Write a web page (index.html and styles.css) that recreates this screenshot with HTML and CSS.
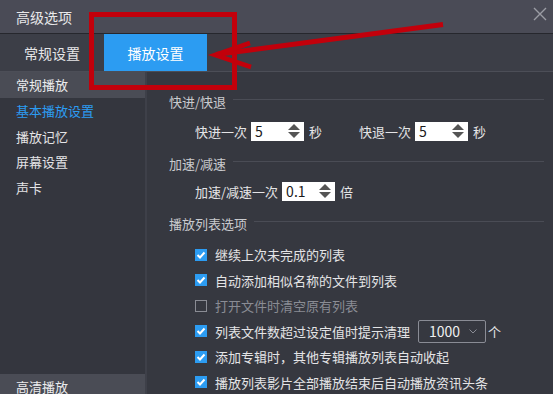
FILE: index.html
```html
<!DOCTYPE html>
<html lang="zh-CN">
<head>
  <meta charset="UTF-8">
  <title>高级选项</title>
  <link rel="stylesheet" href="styles.css">
</head>
<body>
  <div class="window">
    <div class="titlebar">
      <span class="title">高级选项</span>
      <svg class="close" width="14" height="14" viewBox="0 0 14 14">
        <path d="M1 1 L13 13 M13 1 L1 13" stroke="#9b9ca4" stroke-width="1.4" fill="none"/>
      </svg>
    </div>

    <div class="tabs">
      <div class="tab">常规设置</div>
      <div class="tab active">播放设置</div>
    </div>

    <div class="main">
      <aside class="sidebar">
        <div class="group-head">常规播放</div>
        <ul class="nav">
          <li class="current">基本播放设置</li>
          <li>播放记忆</li>
          <li>屏幕设置</li>
          <li>声卡</li>
        </ul>
        <div class="group-head">高清播放</div>
      </aside>

      <section class="content">
        <div class="section-head first"><span>快进/快退</span></div>
        <div class="row">
          <span>快进一次</span>
          <span class="spin"><span class="val">5</span><span class="arrows"><i class="up"></i><i class="down"></i></span></span>
          <span class="unit">秒</span>
          <span class="gap">快退一次</span>
          <span class="spin"><span class="val">5</span><span class="arrows"><i class="up"></i><i class="down"></i></span></span>
          <span class="unit">秒</span>
        </div>

        <div class="section-head"><span>加速/减速</span></div>
        <div class="row speed">
          <span>加速/减速一次</span>
          <span class="spin"><span class="val">0.1</span><span class="arrows"><i class="up"></i><i class="down"></i></span></span>
          <span class="unit">倍</span>
        </div>

        <div class="section-head"><span>播放列表选项</span></div>
        <ul class="checks">
          <li><span class="box on"></span>继续上次未完成的列表</li>
          <li><span class="box on"></span>自动添加相似名称的文件到列表</li>
          <li class="off"><span class="box"></span>打开文件时清空原有列表</li>
          <li><span class="box on"></span>列表文件数超过设定值时提示清理
            <span class="select">1000<svg width="8" height="5" viewBox="0 0 8 5"><path d="M0.5 0.5 L4 4 L7.5 0.5" stroke="#8a8c95" fill="none"/></svg></span>个</li>
          <li><span class="box on"></span>添加专辑时，其他专辑播放列表自动收起</li>
          <li><span class="box on"></span>播放列表影片全部播放结束后自动播放资讯头条</li>
        </ul>
      </section>
    </div>

    <!-- annotation drawn over the screenshot -->
    <svg class="mark" width="553" height="394" viewBox="0 0 553 394">
      <rect x="91.5" y="14.5" width="143" height="73" fill="none" stroke="#c2000b" stroke-width="5"/>
      <path d="M443 24.5 L216 54.5" stroke="#c2000b" stroke-width="5" fill="none"/>
      <path d="M250 43 L215 55 L251 67" stroke="#c2000b" stroke-width="4.5" fill="none" stroke-linejoin="miter"/>
    </svg>
  </div>
</body>
</html>
```

FILE: styles.css
```css
html, body {
  margin: 0;
  padding: 0;
  overflow: hidden;
}
body {
  font-family: "Noto Sans CJK SC", "Noto Sans", sans-serif;
  font-size: 13px;
  color: #e4e4e6;
  background: #363840;
}
.window {
  position: relative;
  width: 553px;
  height: 400px;
  overflow: hidden;
  background: #363840;
}
.titlebar {
  height: 33px;
  display: flex;
  align-items: center;
  justify-content: space-between;
  padding: 0 6px 0 16px;
  background: #4a4b56;
  border-bottom: 1px solid #26272d;
}
.title {
  font-size: 14px;
  color: #e8e8ea;
}
.close {
  margin-top: -5px;
}
.tabs {
  height: 37px;
  display: flex;
  background: #3c3e47;
  border-bottom: 1px solid #4c4e57;
}
.tab {
  width: 104px;
  display: flex;
  align-items: center;
  justify-content: center;
  font-size: 14px;
  color: #e6e6e8;
}
.tab.active {
  width: 103px;
  background: #2c9cf2;
  color: #fff;
}
.main {
  display: flex;
  height: 328px;
}
.sidebar {
  width: 145px;
  display: flex;
  flex-direction: column;
  background: #34363e;
  border-right: 2px solid #3e4049;
}
.group-head {
  height: 26px;
  line-height: 26px;
  padding-left: 16px;
  background: #4a4c55;
  color: #ececee;
}
.nav {
  list-style: none;
  margin: 0;
  padding: 0;
  flex: 1;
}
.nav li {
  height: 25.5px;
  line-height: 25.5px;
  padding-left: 16px;
}
.nav li.current {
  color: #2c9cf2;
}
.content {
  flex: 1;
  padding: 19px 9px 0 22px;
}
.section-head {
  display: flex;
  align-items: center;
  height: 20px;
  margin-top: 10px;
  color: #c9cace;
}
.section-head.first {
  margin-top: 0;
}
.section-head::after {
  content: "";
  flex: 1;
  border-top: 1px solid #4a4c55;
  margin: -3px 0 0 7px;
}
.row {
  display: flex;
  align-items: center;
  height: 24px;
  margin-top: 8px;
  padding-left: 26px;
}
.row.speed {
  margin-top: 6px;
}
.spin {
  display: flex;
  align-items: center;
  justify-content: space-between;
  width: 53px;
  height: 19px;
  margin-left: 4px;
  padding: 0 4px 0 4px;
  box-sizing: border-box;
  background: #fff;
  color: #1a1a1a;
  font-size: 14px;
}
.val {
  line-height: 19px;
}
.arrows {
  display: flex;
  flex-direction: column;
  gap: 2px;
}
.arrows i {
  width: 0;
  height: 0;
  border-left: 6px solid transparent;
  border-right: 6px solid transparent;
}
.arrows .up {
  border-bottom: 6px solid #555;
}
.arrows .down {
  border-top: 6px solid #555;
}
.unit {
  margin-left: 5px;
}
.gap {
  margin-left: 37px;
}
.checks {
  list-style: none;
  margin: 9px 0 0;
  padding: 0 0 0 26px;
}
.checks li {
  display: flex;
  align-items: center;
  height: 25.5px;
  white-space: nowrap;
}
.checks li.off {
  color: #8a8c94;
}
.box {
  width: 12px;
  height: 12px;
  margin-right: 8px;
  box-sizing: border-box;
  border: 1px solid #8a8c94;
  flex-shrink: 0;
}
.box.on {
  border: none;
  background: #2c9cf2 url("data:image/svg+xml,%3Csvg xmlns='http://www.w3.org/2000/svg' width='12' height='12'%3E%3Cpath d='M2.5 6 L5 8.5 L9.5 3.5' stroke='white' stroke-width='2' fill='none'/%3E%3C/svg%3E") no-repeat center;
}
.select {
  display: inline-flex;
  align-items: center;
  justify-content: space-between;
  width: 68px;
  height: 23px;
  margin: 0 2px 0 8px;
  padding: 0 8px 0 10px;
  box-sizing: border-box;
  border: 1px solid #8a8c95;
  border-radius: 2px;
  font-size: 14px;
  color: #f0f0f0;
}
.mark {
  position: absolute;
  left: 0;
  top: 0;
  pointer-events: none;
}
```
